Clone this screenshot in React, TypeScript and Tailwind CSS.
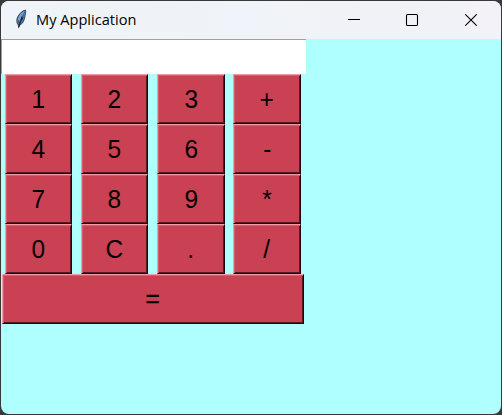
const keys = ['1', '2', '3', '+', '4', '5', '6', '-', '7', '8', '9', '*', '0', 'C', '.', '/'];

function Key({ label, size }: { label: string; size: string }) {
  return (
    <button
      className={`flex h-[50px] items-center justify-center border border-t-[#f09aa5] border-r-[#1c090c] border-b-[#1c090c] border-l-[#f09aa5] bg-[#c94152] text-[26px] leading-none text-black shadow-[inset_1px_1px_0_#da5b6b,inset_-1px_-1px_0_#561c24] ${size}`}
    >
      <span className="block origin-center scale-x-[0.94]">{label}</span>
    </button>
  );
}

function Feather() {
  return (
    <svg className="ml-3.5 mt-2 h-5 w-3 shrink-0" viewBox="0 0 12 20">
      <path d="M10.9.4C7.4.9 4.2 3.8 2.2 7.8.9 10.6.8 13.6 2.7 16l.9 3.4L5.2 16.3c3.6-2 4.8-5.5 5.2-9 .3-2.3 1.3-4.5.5-6.9Z" fill="#42505f" />
      <path d="M10.1 1.5C6.6 3 3.9 6 2.9 9.5c-.6 2.4-.5 4.2.5 5.7L7.2 7Z" fill="#6fa3e0" />
      <path d="M10.3 1.8 4.2 15.8c3-1.5 4.7-4.6 5.1-7.9.3-2.2 1.5-3.9 1-6.1Z" fill="#3f7cc9" />
      <path d="M7 7.5 3.7 18.4" fill="none" stroke="#151e29" strokeWidth="1" />
      <path d="m8 8.5-1.5 3M3.6 11.5l.5 3" fill="none" stroke="#151e29" strokeWidth=".8" />
    </svg>
  );
}

export default function App() {
  return (
    <div className="h-[415px] w-[502px] bg-[#393939] p-px">
      <div className="flex h-[413px] w-[500px] flex-col overflow-hidden rounded-[8px] bg-[#b0ffff]">
        <header className="flex h-[38px] shrink-0 items-start bg-linear-to-r from-[#eef4f9] to-[#f2f2f8]">
          <Feather />
          <span className="ml-[9px] mt-2 font-['Open_Sans',sans-serif] text-[14.6px] leading-5 text-black">
            My Application
          </span>
          <svg className="ml-auto mr-[23px] mt-3 h-[14px] w-[131px] shrink-0" viewBox="0 0 131 14" fill="none" stroke="#000">
            <path d="M1 6.5h12" />
            <rect x="59.5" y="1.5" width="11" height="11" rx="1" strokeWidth="1.1" />
            <path d="m118.3 1.3 11.4 11.4m0-11.4-11.4 11.4" strokeWidth="1.1" />
          </svg>
        </header>
        <main className="w-[305px] font-['Liberation_Sans',Arial,sans-serif]">
          <input
            aria-label="Expression"
            className="block h-[35px] w-full border-t border-l border-t-[#a0a0a0] border-l-[#a0a0a0] bg-white outline-none"
          />
          <div className="ml-1 grid grid-cols-[repeat(4,76px)]">
            {keys.map((key, index) => (
              <Key key={key} label={key} size={index % 4 < 2 ? 'w-[67px]' : 'w-[68px]'} />
            ))}
          </div>
          <Key label="=" size="ml-px w-[302px] pb-0.5 [-webkit-text-stroke:0.4px_black]" />
        </main>
      </div>
    </div>
  );
}
